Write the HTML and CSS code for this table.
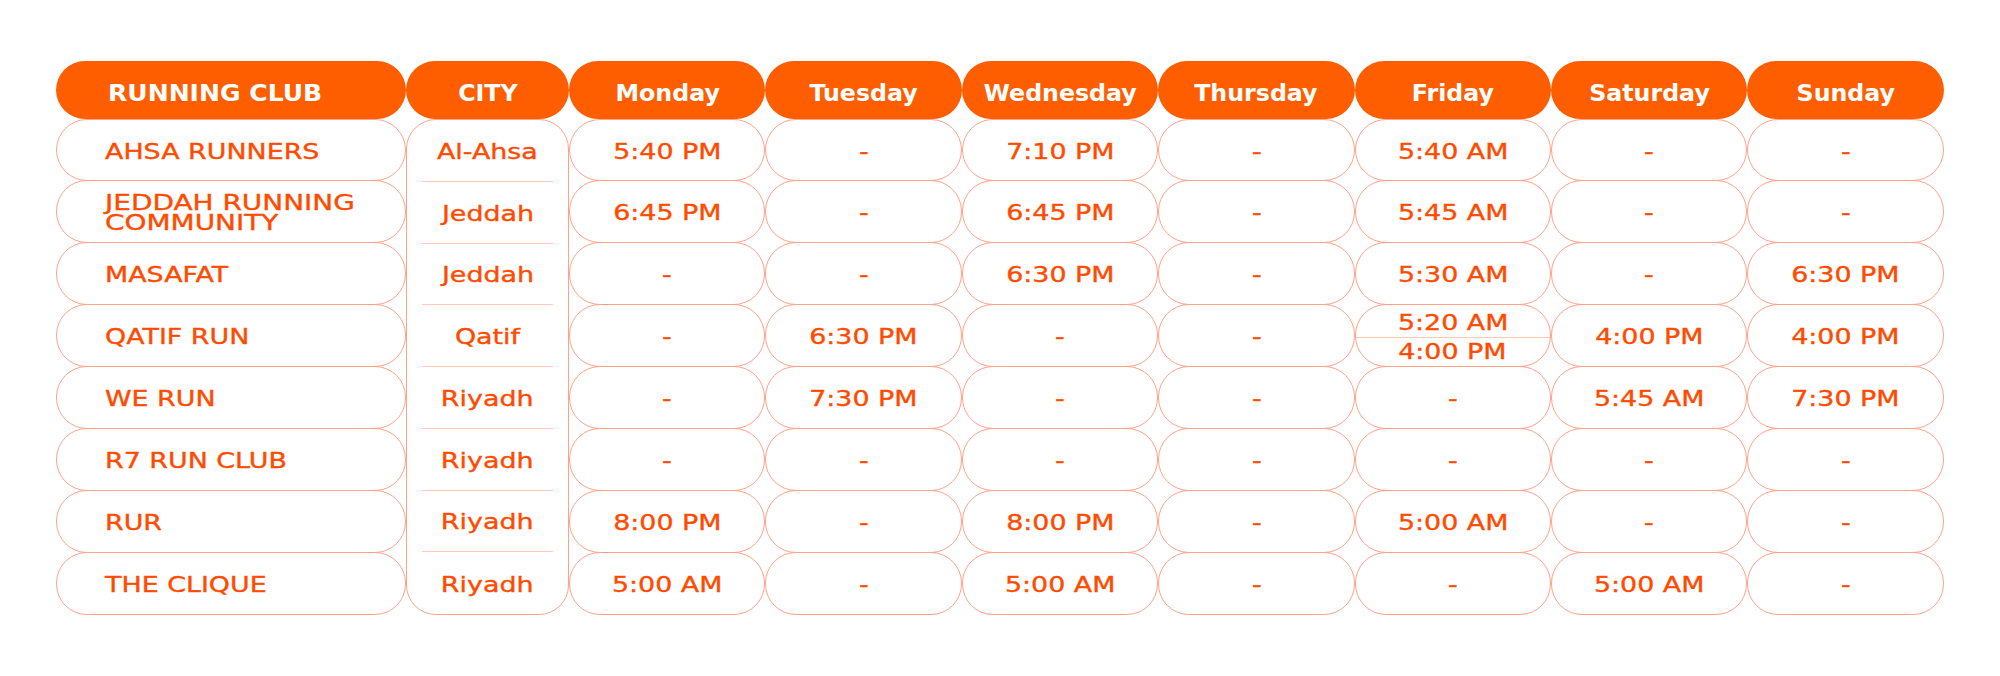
FILE: index.html
```html
<!DOCTYPE html>
<html lang="en">
<head>
<meta charset="utf-8">
<title>Running Clubs Schedule</title>
<link rel="stylesheet" href="styles.css">
</head>
<body>
<div class="page">
  <div class="schedule">
    <div class="head head-club"><span class="ht">RUNNING CLUB</span></div>
    <div class="head"><span class="ht">CITY</span></div>
    <div class="head"><span class="ht">Monday</span></div>
    <div class="head"><span class="ht">Tuesday</span></div>
    <div class="head"><span class="ht">Wednesday</span></div>
    <div class="head"><span class="ht">Thursday</span></div>
    <div class="head"><span class="ht">Friday</span></div>
    <div class="head"><span class="ht">Saturday</span></div>
    <div class="head"><span class="ht">Sunday</span></div>

    <div class="city-col">
      <div class="city"><span class="t">Al-Ahsa</span></div>
      <div class="city"><span class="t">Jeddah</span></div>
      <div class="city"><span class="t">Jeddah</span></div>
      <div class="city"><span class="t">Qatif</span></div>
      <div class="city"><span class="t">Riyadh</span></div>
      <div class="city"><span class="t">Riyadh</span></div>
      <div class="city"><span class="t">Riyadh</span></div>
      <div class="city"><span class="t">Riyadh</span></div>
    </div>

    <div class="cell club"><span class="t">AHSA RUNNERS</span></div>
    <div class="cell"><span class="t">5:40 PM</span></div>
    <div class="cell"><span class="t">-</span></div>
    <div class="cell"><span class="t">7:10 PM</span></div>
    <div class="cell"><span class="t">-</span></div>
    <div class="cell"><span class="t">5:40 AM</span></div>
    <div class="cell"><span class="t">-</span></div>
    <div class="cell"><span class="t">-</span></div>

    <div class="cell club"><span class="t two"><span class="ln">JEDDAH RUNNING</span><span class="ln">COMMUNITY</span></span></div>
    <div class="cell"><span class="t">6:45 PM</span></div>
    <div class="cell"><span class="t">-</span></div>
    <div class="cell"><span class="t">6:45 PM</span></div>
    <div class="cell"><span class="t">-</span></div>
    <div class="cell"><span class="t">5:45 AM</span></div>
    <div class="cell"><span class="t">-</span></div>
    <div class="cell"><span class="t">-</span></div>

    <div class="cell club"><span class="t">MASAFAT</span></div>
    <div class="cell"><span class="t">-</span></div>
    <div class="cell"><span class="t">-</span></div>
    <div class="cell"><span class="t">6:30 PM</span></div>
    <div class="cell"><span class="t">-</span></div>
    <div class="cell"><span class="t">5:30 AM</span></div>
    <div class="cell"><span class="t">-</span></div>
    <div class="cell"><span class="t">6:30 PM</span></div>

    <div class="cell club"><span class="t">QATIF RUN</span></div>
    <div class="cell"><span class="t">-</span></div>
    <div class="cell"><span class="t">6:30 PM</span></div>
    <div class="cell"><span class="t">-</span></div>
    <div class="cell"><span class="t">-</span></div>
    <div class="cell split">
      <div class="half"><span class="t">5:20 AM</span></div>
      <div class="half half-low"><span class="t">4:00 PM</span></div>
    </div>
    <div class="cell"><span class="t">4:00 PM</span></div>
    <div class="cell"><span class="t">4:00 PM</span></div>

    <div class="cell club"><span class="t">WE RUN</span></div>
    <div class="cell"><span class="t">-</span></div>
    <div class="cell"><span class="t">7:30 PM</span></div>
    <div class="cell"><span class="t">-</span></div>
    <div class="cell"><span class="t">-</span></div>
    <div class="cell"><span class="t">-</span></div>
    <div class="cell"><span class="t">5:45 AM</span></div>
    <div class="cell"><span class="t">7:30 PM</span></div>

    <div class="cell club"><span class="t">R7 RUN CLUB</span></div>
    <div class="cell"><span class="t">-</span></div>
    <div class="cell"><span class="t">-</span></div>
    <div class="cell"><span class="t">-</span></div>
    <div class="cell"><span class="t">-</span></div>
    <div class="cell"><span class="t">-</span></div>
    <div class="cell"><span class="t">-</span></div>
    <div class="cell"><span class="t">-</span></div>

    <div class="cell club"><span class="t">RUR</span></div>
    <div class="cell"><span class="t">8:00 PM</span></div>
    <div class="cell"><span class="t">-</span></div>
    <div class="cell"><span class="t">8:00 PM</span></div>
    <div class="cell"><span class="t">-</span></div>
    <div class="cell"><span class="t">5:00 AM</span></div>
    <div class="cell"><span class="t">-</span></div>
    <div class="cell"><span class="t">-</span></div>

    <div class="cell club"><span class="t">THE CLIQUE</span></div>
    <div class="cell"><span class="t">5:00 AM</span></div>
    <div class="cell"><span class="t">-</span></div>
    <div class="cell"><span class="t">5:00 AM</span></div>
    <div class="cell"><span class="t">-</span></div>
    <div class="cell"><span class="t">-</span></div>
    <div class="cell"><span class="t">5:00 AM</span></div>
    <div class="cell"><span class="t">-</span></div>
  </div>
</div>
</body>
</html>
```

FILE: styles.css
```css
html, body {
  margin: 0;
  padding: 0;
  background: #ffffff;
}

.page {
  padding: 61px 0 40px 56px;
  font-family: "DejaVu Sans", "Liberation Sans", sans-serif;
}

.schedule {
  display: grid;
  grid-template-columns: 350px 163px repeat(7, 196.4px);
  grid-template-rows: 58px repeat(8, 62px);
}

.head {
  background: #ff5e00;
  border-radius: 29px;
  color: #ffffff;
  display: flex;
  align-items: center;
  justify-content: center;
  padding-top: 6px;
  box-sizing: border-box;
  font-weight: 700;
  font-size: 23px;
}

.head-club {
  justify-content: flex-start;
  padding-left: 52px;
}

.ht {
  display: inline-block;
  transform: scaleX(1.03);
  line-height: 1;
}

.head-club .ht {
  transform-origin: left center;
  transform: scaleX(1.09);
}

.cell {
  border: 1px solid #ffa28a;
  border-radius: 31px;
  margin-top: -1px;
  display: flex;
  align-items: center;
  justify-content: center;
  color: #ff4b00;
  font-size: 21px;
  box-sizing: border-box;
  padding-top: 4px;
}

.cell:nth-child(-n+18) {
  margin-top: 0;
}

.club {
  justify-content: flex-start;
  padding-left: 48px;
}

.t {
  display: inline-block;
  transform: scaleX(1.28);
  line-height: 1;
  white-space: nowrap;
  -webkit-text-stroke: 0.35px currentColor;
}

.club .t {
  transform-origin: left center;
}

.t.two {
  transform: scaleX(1.33);
}

.ln {
  display: block;
  height: 19.5px;
  line-height: 19.5px;
  overflow: visible;
}

.city-col {
  grid-column: 2;
  grid-row: 2 / span 8;
  border: 1px solid #ffa28a;
  border-radius: 30px;
  display: grid;
  grid-template-rows: repeat(8, 1fr);
  box-sizing: border-box;
}

.city {
  margin: 0 15px;
  border-bottom: 1px solid #ffc9b7;
  display: flex;
  align-items: center;
  justify-content: center;
  color: #ff4b00;
  font-size: 21px;
  padding-top: 4px;
}

.city:last-child {
  border-bottom: none;
}

.split {
  flex-direction: column;
  align-items: stretch;
  padding-top: 0;
}

.half {
  flex: 1;
  display: flex;
  align-items: center;
  justify-content: center;
  padding-top: 5px;
}

.half-low {
  border-top: 1px solid #ffc9b7;
  padding-top: 2px;
}
```
